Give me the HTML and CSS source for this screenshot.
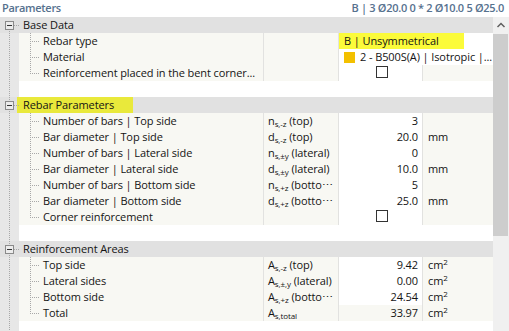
FILE: index.html
```html
<!DOCTYPE html>
<html lang="en">
<head>
    <meta charset="UTF-8">
    <title>Parameters</title>
    <link rel="stylesheet" href="styles.css">
</head>
<body>
    <div class="panel">
        <div class="titlebar">
            <span>Parameters</span>
            <span>B | 3 Ø20.0 0 * 2 Ø10.0 5 Ø25.0</span>
        </div>

        <div class="content">
            <div class="grid">
                <div class="group-head first">
                    <span class="toggle"></span>
                    <span class="head-text">Base Data</span>
                </div>
                <div class="row">
                    <div class="gutter"></div>
                    <div class="cell name">Rebar type</div>
                    <div class="cell sym"></div>
                    <div class="cell wide"><span class="mark">B | Unsymmetrical</span></div>
                </div>
                <div class="row">
                    <div class="gutter"></div>
                    <div class="cell name">Material</div>
                    <div class="cell sym"></div>
                    <div class="cell wide"><span class="swatch"></span>2 - B500S(A) | Isotropic |...</div>
                </div>
                <div class="row last">
                    <div class="gutter"></div>
                    <div class="cell name">Reinforcement placed in the bent corner...</div>
                    <div class="cell sym"></div>
                    <div class="cell val check"><span class="box"></span></div>
                    <div class="cell unit"></div>
                </div>
                <div class="gap"></div>

                <div class="group-head">
                    <span class="toggle"></span>
                    <span class="head-text mark-head">Rebar Parameters</span>
                </div>
                <div class="row">
                    <div class="gutter"></div>
                    <div class="cell name">Number of bars | Top side</div>
                    <div class="cell sym">n<span class="sub">s,-z</span> (top)</div>
                    <div class="cell val">3</div>
                    <div class="cell unit"></div>
                </div>
                <div class="row">
                    <div class="gutter"></div>
                    <div class="cell name">Bar diameter | Top side</div>
                    <div class="cell sym">d<span class="sub">s,-z</span> (top)</div>
                    <div class="cell val">20.0</div>
                    <div class="cell unit">mm</div>
                </div>
                <div class="row">
                    <div class="gutter"></div>
                    <div class="cell name">Number of bars | Lateral side</div>
                    <div class="cell sym">n<span class="sub">s,±y</span> (lateral)</div>
                    <div class="cell val">0</div>
                    <div class="cell unit"></div>
                </div>
                <div class="row">
                    <div class="gutter"></div>
                    <div class="cell name">Bar diameter | Lateral side</div>
                    <div class="cell sym">d<span class="sub">s,±y</span> (lateral)</div>
                    <div class="cell val">10.0</div>
                    <div class="cell unit">mm</div>
                </div>
                <div class="row">
                    <div class="gutter"></div>
                    <div class="cell name">Number of bars | Bottom side</div>
                    <div class="cell sym">n<span class="sub">s,+z</span> (botto⋯</div>
                    <div class="cell val">5</div>
                    <div class="cell unit"></div>
                </div>
                <div class="row">
                    <div class="gutter"></div>
                    <div class="cell name">Bar diameter | Bottom side</div>
                    <div class="cell sym">d<span class="sub">s,+z</span> (botto⋯</div>
                    <div class="cell val">25.0</div>
                    <div class="cell unit">mm</div>
                </div>
                <div class="row last">
                    <div class="gutter"></div>
                    <div class="cell name">Corner reinforcement</div>
                    <div class="cell sym"></div>
                    <div class="cell val check"><span class="box"></span></div>
                    <div class="cell unit"></div>
                </div>
                <div class="gap"></div>

                <div class="group-head">
                    <span class="toggle"></span>
                    <span class="head-text">Reinforcement Areas</span>
                </div>
                <div class="row">
                    <div class="gutter"></div>
                    <div class="cell name">Top side</div>
                    <div class="cell sym">A<span class="sub">s,-z</span> (top)</div>
                    <div class="cell val">9.42</div>
                    <div class="cell unit">cm<sup>2</sup></div>
                </div>
                <div class="row">
                    <div class="gutter"></div>
                    <div class="cell name">Lateral sides</div>
                    <div class="cell sym">A<span class="sub">s,±,y</span> (lateral)</div>
                    <div class="cell val">0.00</div>
                    <div class="cell unit">cm<sup>2</sup></div>
                </div>
                <div class="row">
                    <div class="gutter"></div>
                    <div class="cell name">Bottom side</div>
                    <div class="cell sym">A<span class="sub">s,+z</span> (botto⋯</div>
                    <div class="cell val">24.54</div>
                    <div class="cell unit">cm<sup>2</sup></div>
                </div>
                <div class="row last">
                    <div class="gutter"></div>
                    <div class="cell name">Total</div>
                    <div class="cell sym">A<span class="sub">s,total</span></div>
                    <div class="cell val readonly">33.97</div>
                    <div class="cell unit">cm<sup>2</sup></div>
                </div>
                <div class="gap"></div>
            </div>

            <div class="scrollbar">
                <div class="arrow">
                    <svg width="16" height="16" viewBox="0 0 16 16">
                        <path d="M4.5 10 L8 6.5 L11.5 10" fill="none" stroke="#606060" stroke-width="1.5"/>
                    </svg>
                </div>
                <div class="thumb"></div>
            </div>
        </div>
    </div>
</body>
</html>
```

FILE: styles.css
```css
body {
    margin: 0;
    font-family: "Open Sans", "Liberation Sans", sans-serif;
    font-size: 11px;
    letter-spacing: -0.1px;
    color: #141414;
    background-color: #fff;
}

.panel {
    width: 509px;
    height: 331px;
    overflow: hidden;
}

.titlebar {
    height: 17px;
    line-height: 16px;
    display: flex;
    justify-content: space-between;
    padding: 0 5px 0 2px;
    color: #56718e;
    font-weight: 600;
    letter-spacing: -0.3px;
}

.content {
    display: flex;
    height: 314px;
}

.grid {
    width: 493px;
    background:
        repeating-linear-gradient(to bottom, #a8a8a8 0 1px, transparent 1px 2px) 9px 0 / 1px 100% no-repeat,
        linear-gradient(#e7e7e7, #e7e7e7) 0 0 / 19px 100% no-repeat,
        #fff;
}

/* group header */
.group-head {
    position: relative;
    height: 16px;
    line-height: 16px;
    display: flex;
    align-items: center;
    background-color: #e1e1e1;
    padding-left: 17px;
}

.group-head::before {
    content: "";
    position: absolute;
    left: 9px;
    top: 0;
    width: 1px;
    height: 100%;
    background: repeating-linear-gradient(to bottom, #a8a8a8 0 1px, transparent 1px 2px);
}

.group-head.first::before {
    top: 8px;
    height: 8px;
}

.group-head::after {
    content: "";
    position: absolute;
    left: 14px;
    top: 8px;
    width: 6px;
    height: 1px;
    background: repeating-linear-gradient(to right, #a8a8a8 0 1px, transparent 1px 2px);
}

.toggle {
    position: absolute;
    left: 5px;
    top: 4px;
    width: 7px;
    height: 7px;
    border: 1px solid #8a8a8a;
    background-color: #ececec;
    z-index: 1;
}

.toggle::after {
    content: "";
    position: absolute;
    left: 1px;
    top: 3px;
    width: 5px;
    height: 1px;
    background-color: #333;
}

.head-text {
    padding: 0 6px;
    height: 16px;
}

.mark-head {
    background-color: #e9e93b;
    width: 104px;
}

/* property rows */
.row {
    display: grid;
    grid-template-columns: 19px 245px 75px 84px 70px;
    height: 16px;
    line-height: 16px;
}

.cell {
    white-space: nowrap;
    overflow: hidden;
    background-color: #f8f8f3;
    border-right: 1px solid #e2e2e0;
}

.name {
    position: relative;
    padding-left: 24px;
}

.name::before {
    content: "";
    position: absolute;
    left: 11px;
    top: 0;
    width: 1px;
    height: 100%;
    background: repeating-linear-gradient(to bottom, #a8a8a8 0 1px, transparent 1px 2px);
}

.row.last .name::before {
    height: 9px;
}

.name::after {
    content: "";
    position: absolute;
    left: 13px;
    top: 8px;
    width: 8px;
    height: 1px;
    background: repeating-linear-gradient(to right, #a8a8a8 0 1px, transparent 1px 2px);
}

.sym {
    padding-left: 4px;
}

.sub {
    font-size: 8px;
    vertical-align: -2px;
    line-height: 0;
}

sup {
    font-size: 8px;
    vertical-align: 4px;
    line-height: 0;
}

.val {
    background-color: #fff;
    text-align: right;
    padding-right: 4px;
}

.val.readonly {
    background-color: #f8f8f3;
}

.unit {
    border-right: none;
    padding-left: 5px;
}

.wide {
    grid-column: span 2;
    background-color: #fff;
    border-right: none;
    display: flex;
    align-items: center;
}

.mark {
    display: block;
    width: 120px;
    height: 16px;
    padding-left: 5px;
    background-color: #fbfb3a;
}

.swatch {
    width: 11px;
    height: 11px;
    margin: 0 5px 0 5px;
    background-color: #f3c000;
}

.check {
    text-align: left;
    padding: 0;
    position: relative;
}

.box {
    position: absolute;
    left: 37px;
    top: 1px;
    width: 10px;
    height: 10px;
    border: 1px solid #333;
    background-color: #fff;
}

.gap {
    height: 16px;
}

/* scrollbar */
.scrollbar {
    width: 16px;
    background-color: #f0f0f0;
}

.arrow {
    height: 16px;
}

.arrow svg {
    display: block;
}

.thumb {
    margin-top: 1px;
    width: 15px;
    height: 202px;
    background-color: #cdcdcd;
}
```
